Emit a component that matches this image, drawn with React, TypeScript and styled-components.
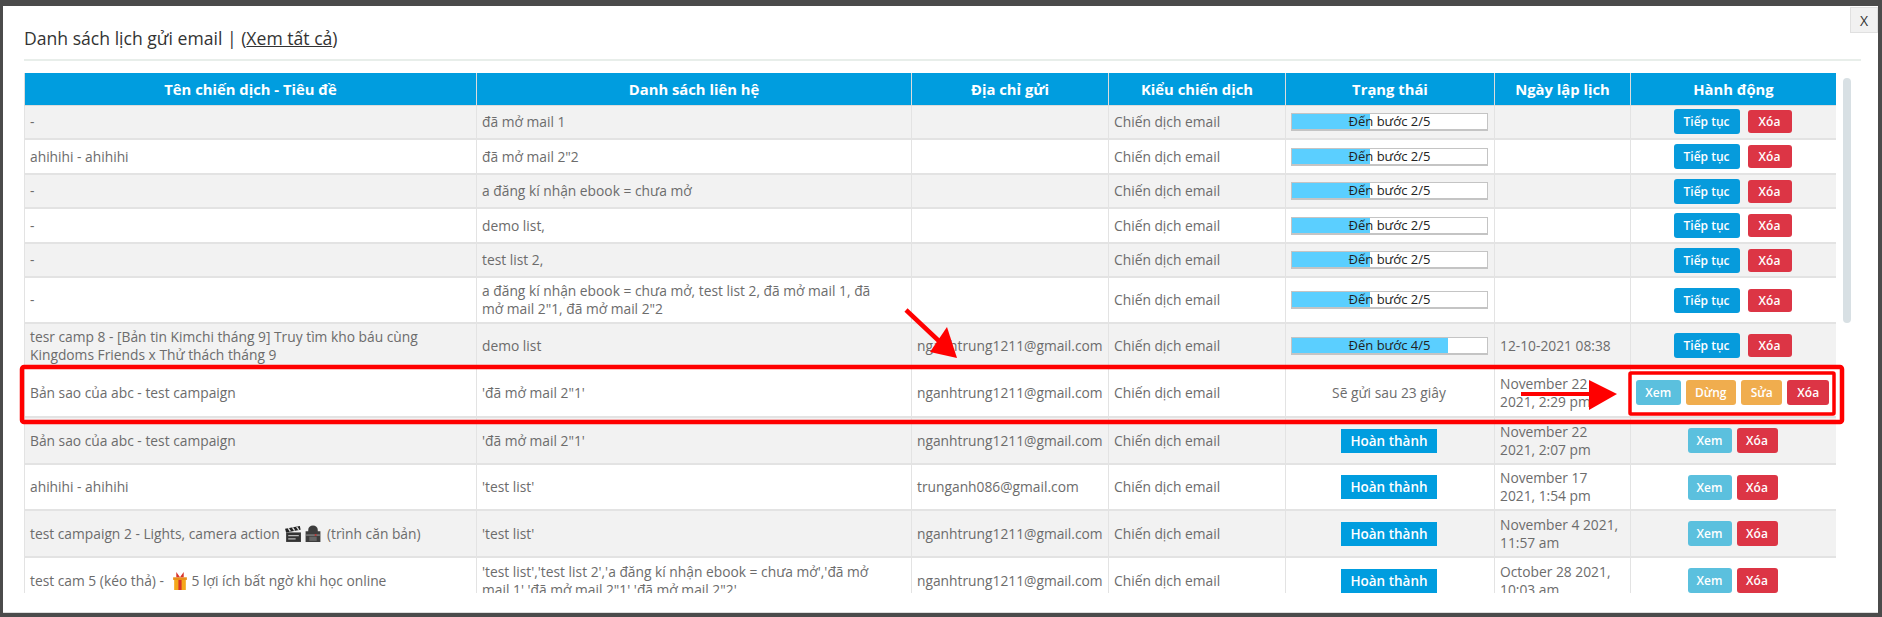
import React from "react";
import styled, { createGlobalStyle } from "styled-components";

const FONT = `"Open Sans", "Noto Sans", "Liberation Sans", sans-serif`;

const Global = createGlobalStyle`
  html, body { margin: 0; padding: 0; height: 617px; overflow: hidden; background: #4b4b4b; }
  #root { height: 617px; }
`;

const Page = styled.div`
  position: relative;
  box-sizing: border-box;
  height: 617px;
  padding: 6px 4px 4px 3px;
  background: #4b4b4b;
  font-family: ${FONT};
`;

const Modal = styled.div`
  position: relative;
  box-sizing: border-box;
  height: 607px;
  background: #fff;
  border-bottom: 1px solid #ddd;
  padding: 0 17px 0 21px;
  display: flex;
  flex-direction: column;
`;

const Close = styled.button`
  position: absolute;
  top: 1px;
  right: 0;
  width: 28px;
  height: 26px;
  padding: 0;
  border: 1px solid #e0e0e0;
  background: #f1f1f1;
  color: #333;
  font: 14px ${FONT};
`;

const Title = styled.h2`
  margin: 0;
  height: 55px;
  box-sizing: border-box;
  padding-top: 22px;
  border-bottom: 2px solid #e8eeea;
  font-size: 17.6px;
  line-height: 20px;
  font-weight: 400;
  color: #333;
`;

const TitleLink = styled.a`
  color: #333;
  text-decoration: underline;
`;

const Body = styled.div`
  display: flex;
  gap: 7px;
  margin-top: 12px;
`;

const TableClip = styled.div`
  width: 1812px;
  height: 520px;
  overflow: hidden;
`;

const Table = styled.table`
  width: 1812px;
  table-layout: fixed;
  border-collapse: collapse;
  font-size: 13.8px;
  line-height: 18px;
  color: #6c6c6c;
`;

const Th = styled.th<{ $w: number }>`
  box-sizing: border-box;
  width: ${(p) => p.$w}px;
  height: 32px;
  padding: 0;
  background: #009ddf;
  border: 1px solid #dcdcdc;
  border-top: 0;
  color: #fff;
  font-size: 14.8px;
  font-weight: 700;
`;

const Row = styled.tr<{ $h: number; $shade: boolean }>`
  height: ${(p) => p.$h}px;
  background: ${(p) => (p.$shade ? "#f2f2f2" : "#fff")};
`;

const Td = styled.td<{ $center?: boolean }>`
  box-sizing: border-box;
  padding: 0 7px 0 5px;
  border: 1px solid #e3e3e3;
  border-bottom-width: 2px;
  vertical-align: middle;
  text-align: ${(p) => (p.$center ? "center" : "left")};
  overflow: hidden;
`;

const ListCell = styled(Td)`
  padding-right: 16px;
`;

const Progress = styled.div`
  position: relative;
  box-sizing: border-box;
  width: 197px;
  height: 18px;
  border: 1px solid #c4c4c4;
  border-bottom-width: 2px;
  background: #fff;
  color: #222;
  font-size: 13px;
  line-height: 15px;
  text-align: center;
`;

const ProgressFill = styled.div`
  position: absolute;
  inset: 0 auto 0 0;
  background: #5bcfff;
`;

const ProgressLabel = styled.span`
  position: relative;
`;

const Badge = styled.span`
  display: inline-block;
  width: 96px;
  height: 24px;
  background: #009ddf;
  color: #fff;
  font-size: 13.5px;
  line-height: 24px;
  font-weight: 600;
  text-align: center;
`;

const Actions = styled.div<{ $gap: number }>`
  display: flex;
  justify-content: center;
  align-items: center;
  gap: ${(p) => p.$gap}px;
`;

const COLORS = { blue: "#069bdc", info: "#5bc0de", warn: "#f0ad4e", red: "#dc3545" };

const Btn = styled.button<{ $kind: keyof typeof COLORS; $w: number; $h: number }>`
  width: ${(p) => p.$w}px;
  height: ${(p) => p.$h}px;
  padding: 0;
  border: 0;
  border-radius: 3px;
  background: ${(p) => COLORS[p.$kind]};
  color: #fff;
  font: 600 12px ${FONT};
`;

const ScrollTrack = styled.div`
  width: 8px;
  padding-top: 5px;
`;

const ScrollThumb = styled.div`
  height: 245px;
  border-radius: 4px;
  background: #d8e0e4;
`;

const Overlay = styled.svg`
  position: absolute;
  inset: 0;
  width: 1882px;
  height: 617px;
  pointer-events: none;
`;

const Emoji = styled.svg<{ $w: number }>`
  display: inline-block;
  vertical-align: -4px;
  width: ${(p) => p.$w}px;
  height: 18px;
`;

const Clapper = () => (
  <Emoji $w={20} viewBox="0 0 17 17">
    <path d="M2 7h14v9H2z" fill="#333" />
    <path d="M1 3.5 15 1l.7 3.4L2 7z" fill="#222" />
    <path d="m4 3 2 3M8 2.3l2 3M12 1.7l2 3" stroke="#ddd" strokeWidth="1.3" />
    <path d="M4 10h10M4 13h7" stroke="#bbb" strokeWidth="1.2" />
  </Emoji>
);

const Backpack = () => (
  <Emoji $w={20} viewBox="0 0 17 17">
    <path d="M4 6V4.5C4 2 6 .5 8.5.5S13 2 13 4.5V6h2.5v10h-14V6z" fill="#3d3d3d" />
    <path d="M2 9.5h13" stroke="#999" />
    <rect x="5" y="11" width="7" height="4" fill="#666" />
    <circle cx="11" cy="9.5" r="1" fill="#b33" />
  </Emoji>
);

const Gift = () => (
  <Emoji $w={24} viewBox="0 0 17 17">
    <path d="M3 6h11v11H3z" fill="#f5a81c" />
    <path d="M7 6h3v11H7z" fill="#d8342a" />
    <path d="M2 5h13v2.5H2z" fill="#e9911a" />
    <path d="M8.5 5 5 0v5zM8.5 5 12 0v5z" fill="#d8342a" />
  </Emoji>
);

type Action = [keyof typeof COLORS, string, number, number?];

type Rec = {
  h: number;
  name: React.ReactNode;
  list: string;
  mail?: string;
  status: { step?: number; text?: string; done?: boolean };
  date?: string;
  gap?: number;
  actions: Action[];
};

const resume: Action[] = [["blue", "Tiếp tục", 66], ["red", "Xóa", 44, 23]];
const view: Action[] = [["info", "Xem", 44], ["red", "Xóa", 41]];
const mail = "nganhtrung1211@gmail.com";

const rows: Rec[] = [
  { h: 34, gap: 8, name: "-", list: "đã mở mail 1", status: { step: 2 }, actions: resume },
  { h: 35, gap: 8, name: "ahihihi - ahihihi", list: 'đã mở mail 2"2', status: { step: 2 }, actions: resume },
  { h: 34, gap: 8, name: "-", list: "a đăng kí nhận ebook = chưa mở", status: { step: 2 }, actions: resume },
  { h: 35, gap: 8, name: "-", list: "demo list,", status: { step: 2 }, actions: resume },
  { h: 34, gap: 8, name: "-", list: "test list 2,", status: { step: 2 }, actions: resume },
  { h: 46, gap: 8, name: "-", list: 'a đăng kí nhận ebook = chưa mở, test list 2, đã mở mail 1, đã mở mail 2"1, đã mở mail 2"2', status: { step: 2 }, actions: resume },
  { h: 45, gap: 8, name: "tesr camp 8 - [Bản tin Kimchi tháng 9] Truy tìm kho báu cùng Kingdoms Friends x Thử thách tháng 9", list: "demo list", mail, status: { step: 4 }, date: "12-10-2021 08:38", actions: resume },
  { h: 49, name: "Bản sao của abc - test campaign", list: `'đã mở mail 2"1'`, mail, status: { text: "Sẽ gửi sau 23 giây" }, date: "November 22 2021, 2:29 pm", actions: [["info", "Xem", 45], ["warn", "Dừng", 51], ["warn", "Sửa", 42], ["red", "Xóa", 42]] },
  { h: 47, name: "Bản sao của abc - test campaign", list: `'đã mở mail 2"1'`, mail, status: { done: true }, date: "November 22 2021, 2:07 pm", actions: view },
  { h: 46, name: "ahihihi - ahihihi", list: "'test list'", mail: "trunganh086@gmail.com", status: { done: true }, date: "November 17 2021, 1:54 pm", actions: view },
  { h: 47, name: <>test campaign 2 - Lights, camera action <Clapper /><Backpack /> (trình căn bản)</>, list: "'test list'", mail, status: { done: true }, date: "November 4 2021, 11:57 am", actions: view },
  { h: 47, name: <>test cam 5 (kéo thả) - <Gift />5 lợi ích bất ngờ khi học online</>, list: `'test list','test list 2','a đăng kí nhận ebook = chưa mở','đã mở mail 1','đã mở mail 2"1','đã mở mail 2"2'`, mail, status: { done: true }, date: "October 28 2021, 10:03 am", actions: view },
];

const heads: [string, number][] = [
  ["Tên chiến dịch - Tiêu đề", 452],
  ["Danh sách liên hệ", 435],
  ["Địa chỉ gửi", 197],
  ["Kiểu chiến dịch", 177],
  ["Trạng thái", 209],
  ["Ngày lập lịch", 136],
  ["Hành động", 206],
];

const Status = ({ s }: { s: Rec["status"] }) => {
  if (s.done) return <Badge>Hoàn thành</Badge>;
  if (s.text) return <>{s.text}</>;
  return (
    <Progress>
      <ProgressFill style={{ width: `${((s.step ?? 0) / 5) * 100}%` }} />
      <ProgressLabel>Đến bước {s.step}/5</ProgressLabel>
    </Progress>
  );
};

export default function App() {
  return (
    <Page>
      <Global />
      <Modal>
        <Close>X</Close>
        <Title>
          Danh sách lịch gửi email | (<TitleLink>Xem tất cả</TitleLink>)
        </Title>
        <Body>
          <TableClip>
            <Table>
              <thead>
                <tr>
                  {heads.map(([t, w]) => (
                    <Th key={t} $w={w}>{t}</Th>
                  ))}
                </tr>
              </thead>
              <tbody>
                {rows.map((r, i) => (
                  <Row key={i} $h={r.h} $shade={i % 2 === 0}>
                    <Td>{r.name}</Td>
                    <ListCell>{r.list}</ListCell>
                    <Td>{r.mail}</Td>
                    <Td>Chiến dịch email</Td>
                    <Td $center={!r.status.step}><Status s={r.status} /></Td>
                    <Td>{r.date}</Td>
                    <Td>
                      <Actions $gap={r.gap ?? 5}>
                        {r.actions.map(([k, t, w, h]) => (
                          <Btn key={t} $kind={k} $w={w} $h={h ?? 25}>{t}</Btn>
                        ))}
                      </Actions>
                    </Td>
                  </Row>
                ))}
              </tbody>
            </Table>
          </TableClip>
          <ScrollTrack>
            <ScrollThumb />
          </ScrollTrack>
        </Body>
      </Modal>
      <Overlay viewBox="0 0 1882 617">
        <rect x="22" y="367" width="1820" height="55" rx="2" fill="none" stroke="#f00" strokeWidth="4.5" />
        <rect x="1630" y="373" width="204" height="41" rx="1" fill="none" stroke="#f00" strokeWidth="3.5" />
        <path d="M906 310 940 342" stroke="#f00" strokeWidth="4.5" />
        <path d="M957 358 947 327 930 352Z" fill="#f00" />
        <path d="M1521 394H1592" stroke="#f00" strokeWidth="4" />
        <path d="M1617 394 1589 380V410Z" fill="#f00" />
      </Overlay>
    </Page>
  );
}
